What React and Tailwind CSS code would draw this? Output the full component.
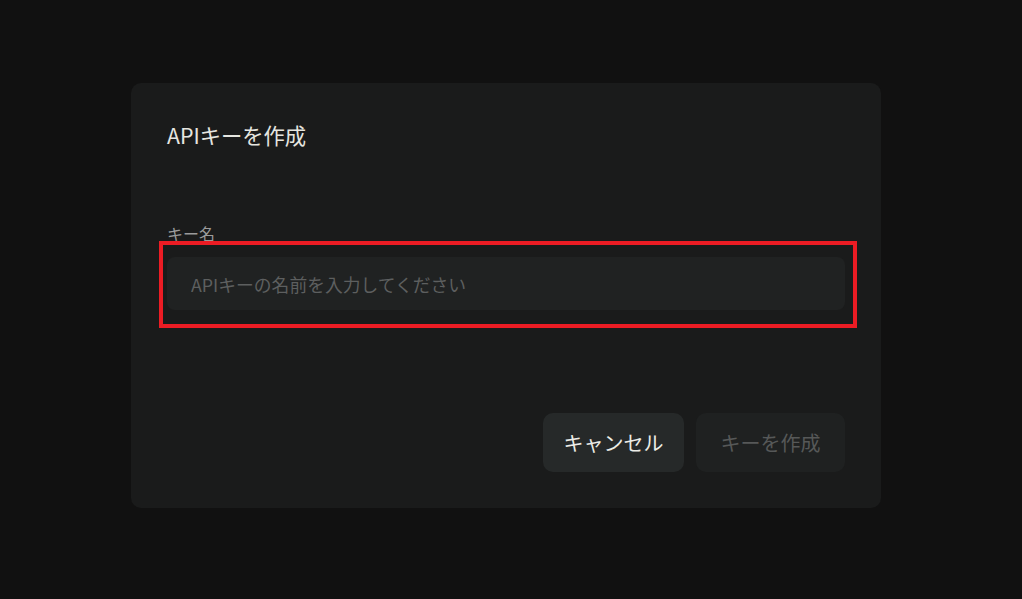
export default function App() {
  return (
    <div
      className="w-[1022px] h-[599px] bg-[#111111] pl-[131px] pt-[83px] overflow-hidden"
      style={{ fontFamily: '"Noto Sans CJK JP", "Noto Sans", sans-serif' }}
    >
      <div className="w-[750px] h-[425px] bg-[#1a1b1b] rounded-[10px] px-9 pt-[38px] flex flex-col">
        <h2 className="text-[21.3px] leading-[28px] text-[#e6e6e0] font-normal">APIキーを作成</h2>
        <label className="mt-[72px] text-[16px] leading-[24px] text-[#9b9b9b]">キー名</label>
        <div className="relative mt-3">
          <input
            type="text"
            placeholder="APIキーの名前を入力してください"
            className="w-full h-[53px] rounded-[8px] bg-[#202222] pl-6 pr-4 text-[17.8px] text-[#e6e6e0] placeholder:text-[#5d5f5f] outline-none"
          />
          <div className="pointer-events-none absolute -top-[16px] -left-[8px] -right-[12px] -bottom-[18px] border-[4px] border-[#ec1c24]" />
        </div>
        <div className="mt-auto mb-9 flex justify-end gap-3">
          <button className="w-[141px] h-[59px] rounded-[10px] bg-[#262929] text-[20px] font-normal text-[#ecece6]">
            キャンセル
          </button>
          <button className="w-[149px] h-[59px] rounded-[10px] bg-[#1f2121] text-[20px] font-normal text-[#565858]">
            キーを作成
          </button>
        </div>
      </div>
    </div>
  );
}
